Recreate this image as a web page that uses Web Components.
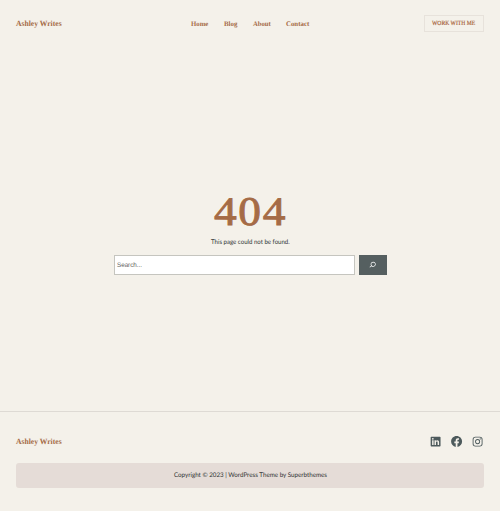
<!DOCTYPE html>
<html lang="en"><head><meta charset="utf-8"><title>Ashley Writes</title>
<style>html,body{margin:0;height:100%;background:#f4f1ea}body{overflow:hidden}</style></head><body>
<site-page></site-page>
<script>
const define=(name,html,after)=>customElements.define(name,class extends HTMLElement{
  constructor(){super();this.attachShadow({mode:'open'}).innerHTML=html;}
  connectedCallback(){if(after)after(this);}
});
// Text condensed or expanded to a fixed measure; the tiny rotation turns glyph hinting off
define('fit-text',`<style>:host{display:block;flex:none;white-space:nowrap;line-height:1.2}span{display:inline-block;transform-origin:0 50%}</style><span><slot></slot></span>`,el=>{
  const w=+el.getAttribute('w'),s=el.shadowRoot.querySelector('span');
  el.style.width=w+'px';
  s.style.transform='rotate(.03deg) scaleX('+w/s.getBoundingClientRect().width+')';
});
define('site-brand',`<style>:host{display:block;font:bold 7.9px "Liberation Serif",serif;color:#a56b46}</style><fit-text w="45.6">Ashley Writes</fit-text>`);
define('site-nav',`<style>:host{display:block;padding-top:1px;font:bold 7px "Liberation Serif",serif;color:#a56b46}nav{display:flex}.a{margin-right:15.8px}.b{margin-right:15.5px}</style><nav><fit-text class="a" w="17.3">Home</fit-text><fit-text class="b" w="13.4">Blog</fit-text><fit-text class="b" w="17.8">About</fit-text><fit-text w="23.2">Contact</fit-text></nav>`);
define('outline-button',`<style>:host{display:flex;box-sizing:border-box;width:60px;height:17px;border:1px solid #e7e2db;align-items:center;justify-content:center;padding-bottom:1px;font:6.5px "Liberation Serif",serif;color:#a45a32;-webkit-text-stroke:.15px #a45a32}</style><fit-text w="43.2"><slot></slot></fit-text>`);
define('site-header',`<style>:host{display:grid;grid-template-columns:174.7px 1fr 60px;align-items:center;height:17px;padding:15px 16px 0 16.3px}</style><site-brand></site-brand><site-nav></site-nav><outline-button>WORK WITH ME</outline-button>`);
define('search-form',`<style>:host{display:flex;gap:4px;width:273px;height:19.5px}
.field{box-sizing:border-box;width:241px;border:1px solid #c5c5bf;background:#fff;display:flex;align-items:center;padding-left:2.5px;font:6.6px "Liberation Sans",sans-serif;color:#5c5c5c}
.go{box-sizing:border-box;width:28px;background:#555f60;display:flex;align-items:center;justify-content:center}</style>
<div class="field"><fit-text w="25">Search...</fit-text></div><div class="go"><svg width="11" height="11" viewBox="0 0 24 24" fill="#fff"><path d="M13.5 6C10.5 6 8 8.500 8 11.500c0 1.100.3 2.100.9 3l-3.400 3 1 1.100 3.400-2.900c1 .9 2.200 1.400 3.600 1.400 3 0 5.500-2.500 5.500-5.500C19 8.500 16.500 6 13.500 6zm0 9.500c-2.200 0-4-1.800-4-4s1.800-4 4-4 4 1.800 4 4-1.800 4-4 4z"/></svg></div>`);
define('not-found',`<style>:host{display:flex;flex-direction:column;align-items:center;height:379px}
h1{margin:155.5px 0 0;height:48px;font:40.5px/48px "Liberation Serif",serif;letter-spacing:1.5px;-webkit-text-stroke:.9px #a56b46;color:#a56b46}h1 fit-text{line-height:48px}
p{height:8px;margin:2px 0 9.500px;font:6.500px "Lato",sans-serif;color:#303434}</style>
<h1><fit-text w="73">404</fit-text></h1><p><fit-text w="78.700">This page could not be found.</fit-text></p><search-form></search-form>`);
define('social-links',`<style>:host{display:flex;gap:7.800px;margin-right:0}svg{display:block;width:13.200px;height:13.200px;fill:#4d5a5c}</style>
<svg viewBox="0 0 24 24"><path d="M19.700 3H4.300C3.582 3 3 3.582 3 4.300v15.400c0 .718.582 1.300 1.300 1.300h15.400c.718 0 1.300-.582 1.300-1.300V4.300c0-.718-.582-1.300-1.300-1.300zM8.339 18.338H5.667v-8.590h2.672v8.590zM7.004 8.574a1.548 1.548 0 1 1 0-3.096 1.548 1.548 0 0 1 0 3.096zm11.335 9.764h-2.669V14.160c0-.996-.017-2.278-1.387-2.278-1.389 0-1.601 1.086-1.601 2.206v4.250h-2.667v-8.590h2.559v1.174h.037c.356-.675 1.227-1.387 2.526-1.387 2.703 0 3.203 1.779 3.203 4.092v4.711z"/></svg>
<svg viewBox="0 0 24 24"><path d="M12 2C6.500 2 2 6.500 2 12c0 5 3.700 9.100 8.400 9.900v-7H7.900V12h2.500V9.800c0-2.500 1.500-3.900 3.800-3.900 1.100 0 2.200.2 2.200.2v2.500h-1.300c-1.200 0-1.600.8-1.600 1.600V12h2.800l-.4 2.900h-2.300v7C18.300 21.100 22 17 22 12c0-5.500-4.500-10-10-10z"/></svg>
<svg viewBox="0 0 24 24"><path fill-rule="evenodd" d="M8 3h8a5 5 0 0 1 5 5v8a5 5 0 0 1-5 5H8a5 5 0 0 1-5-5V8a5 5 0 0 1 5-5zm0 1.620A3.380 3.380 0 0 0 4.620 8v8A3.380 3.380 0 0 0 8 19.380h8A3.380 3.380 0 0 0 19.380 16V8A3.380 3.380 0 0 0 16 4.620zM12 7.380a4.620 4.620 0 1 1 0 9.240 4.620 4.620 0 0 1 0-9.240zM12 9a3 3 0 1 0 0 6 3 3 0 0 0 0-6z"/><circle cx="16.800" cy="7.200" r="1.080"/></svg>`);
define('site-footer',`<style>:host{display:block;border-top:1px solid #dedad4;box-shadow:0 1px 0 #ebe7e0;height:99px}
.top{display:flex;justify-content:space-between;align-items:center;height:14px;padding:22.500px 15.5px 14.500px 16.300px}
.copy{box-sizing:border-box;margin:0 16px;height:24.500px;padding:0 0 1px;border-radius:3px;background:#e5dcd7;display:flex;align-items:center;justify-content:center;font:6.500px "Lato",sans-serif;color:#303434}</style>
<div class="top"><site-brand></site-brand><social-links></social-links></div><div class="copy"><fit-text w="153">Copyright © 2023 | WordPress Theme by Superbthemes</fit-text></div>`);
define('site-page',`<style>:host{display:block;height:511px;background:#f4f1ea}</style><site-header></site-header><not-found></not-found><site-footer></site-footer>`);
</script></body></html>
